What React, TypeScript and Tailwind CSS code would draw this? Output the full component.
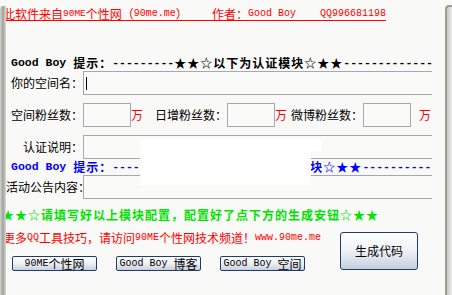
import type { ReactNode } from 'react';

const mono = "font-['Liberation_Mono','Noto_Sans_CJK_SC',monospace]";
const cjk = "font-['Noto_Sans_CJK_SC','Noto_Sans',sans-serif]";

// bold CJK run inside the "提示" rows, SimSun-bold is ~13px per glyph
function B({ children }: { children: ReactNode }) {
  return <span className={`${cjk} text-[12px] tracking-[1px]`}>{children}</span>;
}

function C({ children }: { children: ReactNode }) {
  return <span className={`${cjk} text-[12px]`}>{children}</span>;
}

function M({ children, small }: { children: ReactNode; small?: boolean }) {
  return <span className={`${mono} ${small ? 'text-[9.5px]' : 'text-[10px]'}`}>{children}</span>;
}

function Label({ children }: { children: ReactNode }) {
  return (
    <div className={`w-[77px] shrink-0 whitespace-nowrap text-right text-[12px] leading-none text-black ${cjk}`}>
      {children}
    </div>
  );
}

function Field({ className = '', children }: { className?: string; children?: ReactNode }) {
  return (
    <div className={`flex h-[24px] shrink-0 items-center border border-[#a4a8b0] bg-[#fafaf8] ${className}`}>
      {children}
    </div>
  );
}

function Wan({ className = '' }: { className?: string }) {
  return <span className={`${cjk} w-[12px] shrink-0 text-[12px] leading-none text-[#ff0000] ${className}`}>万</span>;
}

function SmallButton({ children }: { children: ReactNode }) {
  return (
    <button
      type="button"
      className="flex h-[15px] w-[85px] items-center justify-center whitespace-pre rounded-[2px] border border-[#1e3c6e] bg-linear-to-b from-[#ffffff] via-[#eef0f4] to-[#c8d0de] leading-none text-black"
    >
      {children}
    </button>
  );
}

export default function App() {
  return (
    <div className="relative flex h-[295px] w-[452px] overflow-hidden bg-[#f9f9f7]">
      {/* left window edge */}
      <div className="w-[6px] shrink-0 pt-[6px]">
        <div className="h-full rounded-tl-[3px] bg-linear-to-r from-[#d4d4d0] via-[#9fa29b] to-[#dadad6]" />
      </div>

      <div className="w-[439px] shrink-0 overflow-hidden pt-[8px]">
        {/* header */}
        <div className="-ml-[3px] flex h-[13px] w-fit items-center whitespace-pre border-b border-[#ff0000] leading-none text-[#ff0000]">
          <C>此软件来自</C>
          <M small>90ME</M>
          <C>个性网（</C>
          <M>90me.me</M>
          <C>）</C>
          <M>{'    '}</M>
          <C>作者：</C>
          <M>{'Good Boy    QQ996681198'}</M>
        </div>

        {/* 认证模块 tip */}
        <div className={`mt-[34px] flex h-[16px] items-center whitespace-pre pl-[5px] text-[11.5px] font-bold leading-none text-black ${mono}`}>
          <span>Good Boy </span>
          <B>提示：</B>
          <span>---------</span>
          <B>★★☆以下为认证模块☆★★</B>
          <span>-------------</span>
        </div>

        <div className="flex h-[24px] items-center">
          <Label>你的空间名：</Label>
          <Field className="w-[349px] border-r-0 pl-[2px]">
            <div className="h-[13px] w-px bg-black" />
          </Field>
        </div>

        <div className="mt-[8px] flex h-[24px] items-center">
          <Label>空间粉丝数：</Label>
          <Field className="w-[48px]" />
          <Wan />
          <div className={`ml-[12px] shrink-0 whitespace-nowrap text-[12px] leading-none ${cjk}`}>日增粉丝数：</div>
          <Field className="w-[48px]" />
          <Wan />
          <div className={`ml-[4px] shrink-0 whitespace-nowrap text-[12px] leading-none ${cjk}`}>微博粉丝数：</div>
          <Field className="w-[48px]" />
          <Wan className="ml-[8px]" />
        </div>

        <div className="mt-[8px] flex h-[24px] items-center">
          <Label>认证说明：</Label>
          <Field className="w-[349px] border-r-0" />
        </div>

        {/* 活动公告 tip */}
        <div className={`flex h-[16px] items-center whitespace-pre pl-[5px] text-[11.5px] font-bold leading-none text-[#0000ff] ${mono}`}>
          <span>Good Boy </span>
          <B>提示：</B>
          <span>--------</span>
          <B>★★☆以下为活动公告模块☆★★</B>
          <span>----------</span>
        </div>

        <div className="flex h-[24px] items-center">
          <Label>活动公告内容：</Label>
          <Field className="w-[349px] border-r-0" />
        </div>

        <div className={`-ml-[4px] mt-[8px] flex h-[16px] items-center whitespace-nowrap text-[12px] font-bold leading-none tracking-[1px] text-[#00e400] ${cjk}`}>
          ★★☆请填写好以上模块配置，配置好了点下方的生成安钮☆★★
        </div>

        <div className="mt-[7px] flex">
          <div className="w-[334px] shrink-0">
            <div className="-ml-[3px] flex h-[16px] items-center whitespace-pre leading-none text-[#ff0000]">
              <C>更多</C>
              <M>QQ</M>
              <C>工具技巧，请访问</C>
              <M>90ME</M>
              <C>个性网技术频道！</C>
              <M>www.90me.me</M>
            </div>
            <div className="mt-[10px] flex gap-[19px] pl-[6px]">
              <SmallButton>
                <M>90ME</M>
                <C>个性网</C>
              </SmallButton>
              <SmallButton>
                <M>{'Good Boy '}</M>
                <C>博客</C>
              </SmallButton>
              <SmallButton>
                <M>{'Good Boy '}</M>
                <C>空间</C>
              </SmallButton>
            </div>
          </div>
          <button
            type="button"
            className={`mt-[2px] flex h-[38px] w-[78px] shrink-0 items-center justify-center rounded-[3px] border border-[#1e3c6e] bg-linear-to-b from-[#ffffff] via-[#eef1f5] to-[#c5cfdf] text-[12px] leading-none text-black ${cjk}`}
          >
            生成代码
          </button>
        </div>
      </div>

      {/* right window edge */}
      <div className="w-[7px] shrink-0 pt-[5px]">
        <div className="h-full rounded-tl-[4px] border-l-2 border-t-2 border-[#9ba096] bg-linear-to-r from-[#c6c9c1] to-[#eeeeec]" />
      </div>

      {/* blank patch over the form */}
      <div className="absolute left-[140px] top-[139px] h-[12px] w-[181px] bg-white" />
      <div className="absolute left-[140px] top-[150px] h-[35px] w-[171px] bg-white" />
    </div>
  );
}
